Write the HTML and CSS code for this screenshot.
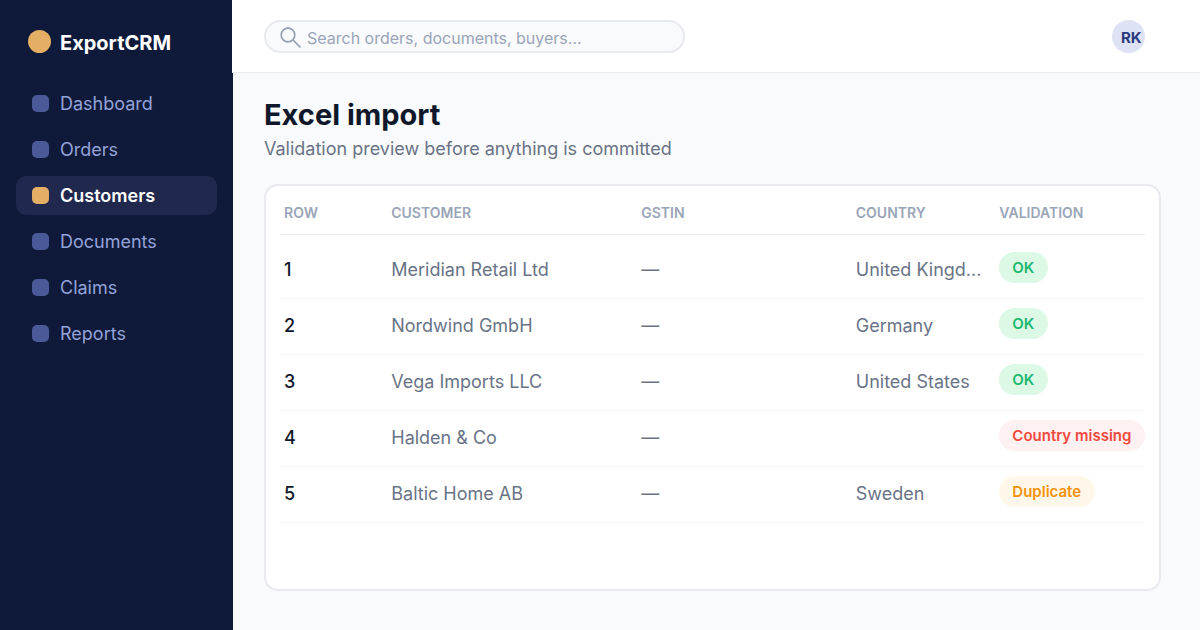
FILE: index.html
```html
<!DOCTYPE html>
<html lang="en">
<head>
<meta charset="utf-8">
<meta name="viewport" content="width=device-width, initial-scale=1">
<title>ExportCRM – Excel import</title>
<link rel="stylesheet" href="styles.css">
</head>
<body>
<div class="app">
  <aside class="sidebar">
    <div class="brand"><span class="brand-mark"></span><span class="brand-name">ExportCRM</span></div>
    <nav class="nav">
      <a class="nav-item" href="#"><span class="nav-icon"></span>Dashboard</a>
      <a class="nav-item" href="#"><span class="nav-icon"></span>Orders</a>
      <a class="nav-item active" href="#" aria-current="page"><span class="nav-icon"></span>Customers</a>
      <a class="nav-item" href="#"><span class="nav-icon"></span>Documents</a>
      <a class="nav-item" href="#"><span class="nav-icon"></span>Claims</a>
      <a class="nav-item" href="#"><span class="nav-icon"></span>Reports</a>
    </nav>
  </aside>
  <div class="main">
    <header class="topbar">
      <label class="search">
        <svg class="search-icon" viewBox="0 0 22 22" width="22" height="22" fill="none" stroke="currentColor" stroke-width="1.7" aria-hidden="true">
          <circle cx="8" cy="8" r="6.8"/>
          <path d="M13 13L20.5 20.5"/>
        </svg>
        <input class="search-input" type="text" placeholder="Search orders, documents, buyers…" aria-label="Search">
      </label>
      <button class="avatar" type="button">RK</button>
    </header>
    <main class="content">
      <h1 class="title">Excel import</h1>
      <p class="subtitle">Validation preview before anything is committed</p>
      <section class="card">
        <table class="table">
          <colgroup>
            <col class="col-row"><col class="col-customer"><col class="col-gstin"><col class="col-country"><col class="col-validation">
          </colgroup>
          <thead>
            <tr><th>ROW</th><th>CUSTOMER</th><th>GSTIN</th><th>COUNTRY</th><th>VALIDATION</th></tr>
          </thead>
          <tbody>
            <tr><td class="num">1</td><td>Meridian Retail Ltd</td><td>—</td><td>United Kingd...</td><td class="status"><span class="pill ok">OK</span></td></tr>
            <tr><td class="num">2</td><td>Nordwind GmbH</td><td>—</td><td>Germany</td><td class="status"><span class="pill ok">OK</span></td></tr>
            <tr><td class="num">3</td><td>Vega Imports LLC</td><td>—</td><td>United States</td><td class="status"><span class="pill ok">OK</span></td></tr>
            <tr><td class="num">4</td><td>Halden &amp; Co</td><td>—</td><td></td><td class="status"><span class="pill error">Country missing</span></td></tr>
            <tr><td class="num">5</td><td>Baltic Home AB</td><td>—</td><td>Sweden</td><td class="status"><span class="pill warn">Duplicate</span></td></tr>
          </tbody>
        </table>
      </section>
    </main>
  </div>
</div>
</body>
</html>
```

FILE: styles.css
```css
* { box-sizing: border-box; }

body {
  margin: 0;
  font-family: Inter, "Liberation Sans", sans-serif;
  font-size: 18px;
  color: #0f172a;
  background: #f9fafc;
}

.app { display: flex; min-height: 100vh; }

.sidebar {
  flex: 0 0 233px;
  padding: 30px 16px;
  background: #0f1a3a;
}

.brand {
  display: flex;
  align-items: flex-start;
  gap: 9px;
  height: 24px;
  margin-bottom: 30px;
  padding-left: 12px;
  font-size: 20px;
  line-height: 26px;
  font-weight: 700;
  color: #fff;
}

.brand-mark {
  width: 23px;
  height: 23px;
  border-radius: 50%;
  background: #e4af64;
}

.nav { display: flex; flex-direction: column; gap: 7px; }

.nav-item {
  display: flex;
  align-items: center;
  gap: 11px;
  height: 39px;
  padding-left: 16px;
  border-radius: 10px;
  color: #94a3d8;
  text-decoration: none;
}

.nav-icon {
  width: 17px;
  height: 17px;
  border-radius: 5px;
  background: #4a5998;
}

.nav-item.active { background: #20284e; color: #fff; font-weight: 600; }
.nav-item.active .nav-icon { background: #e4af64; }

.main { flex: 1; min-width: 0; display: flex; flex-direction: column; }

/* Covers the sidebar's edge by one pixel */
.topbar {
  display: flex;
  align-items: center;
  justify-content: space-between;
  height: 73px;
  margin-left: -1px;
  padding: 0 55px 0 32px;
  background: #fff;
  border-bottom: 1px solid #e9eaee;
}

.search {
  display: flex;
  align-items: center;
  gap: 5px;
  flex: 0 1 421px;
  height: 33px;
  padding: 0 14px;
  border: 2px solid #e9eaee;
  border-radius: 17px;
  background: #f9fafc;
  color: #94a0b4;
}

.search-icon { flex: none; margin-top: 4px; }

.search-input {
  flex: 1;
  min-width: 0;
  padding: 3px 0 0;
  border: 0;
  outline: 0;
  background: transparent;
  font: inherit;
  font-size: 16px;
  color: #0f172a;
}

.search-input::placeholder { color: #9aa5b8; opacity: 1; }

.avatar {
  width: 33px;
  height: 33px;
  padding: 2px 0 0 9px;
  border: 0;
  border-radius: 50%;
  background: #dde2f4;
  font: inherit;
  font-size: 15px;
  font-weight: 700;
  text-align: left;
  color: #2b3a7e;
}

.content {
  flex: 1;
  display: flex;
  flex-direction: column;
  padding: 24px 39px 39px 31px;
}

.title { margin: 0; font-size: 29px; line-height: 36px; font-weight: 700; }
.subtitle { margin: 4px 0 24px; line-height: 23px; color: #697386; }

.card {
  flex: 1;
  padding: 14px;
  border: 2px solid #e9eaee;
  border-radius: 14px;
  background: #fff;
}

.table { width: 100%; table-layout: fixed; border-collapse: separate; border-spacing: 0; }
.col-row { width: 12.4%; }
.col-customer { width: 28.9%; }
.col-gstin { width: 24.8%; }
.col-country { width: 16.6%; }
.col-validation { width: 17.3%; }

.table th {
  height: 35px;
  padding: 0 4px 8px;
  border-bottom: 1px solid #e9eaee;
  font-size: 14px;
  font-weight: 600;
  line-height: 20px;
  text-align: left;
  color: #9aa5b8;
}

.table td {
  height: 56px;
  padding: 0 4px 2px;
  border-bottom: 1px solid #f4f5f7;
  white-space: nowrap;
  color: #697386;
}

.table tbody tr:first-child td { height: 64px; padding-top: 8px; }
.table .num { font-weight: 500; color: #0f172a; }
.table .status { padding-bottom: 7px; }

.pill {
  display: inline-flex;
  align-items: center;
  height: 31px;
  padding: 0 14px 0 13px;
  border-radius: 16px;
  font-size: 15px;
  font-weight: 600;
  vertical-align: middle;
}

.ok { background: #dcf9e6; color: #1db870; }
.error { background: #fef1f1; color: #f04a40; }
.warn { background: #fff8ea; color: #f5920b; }
```
